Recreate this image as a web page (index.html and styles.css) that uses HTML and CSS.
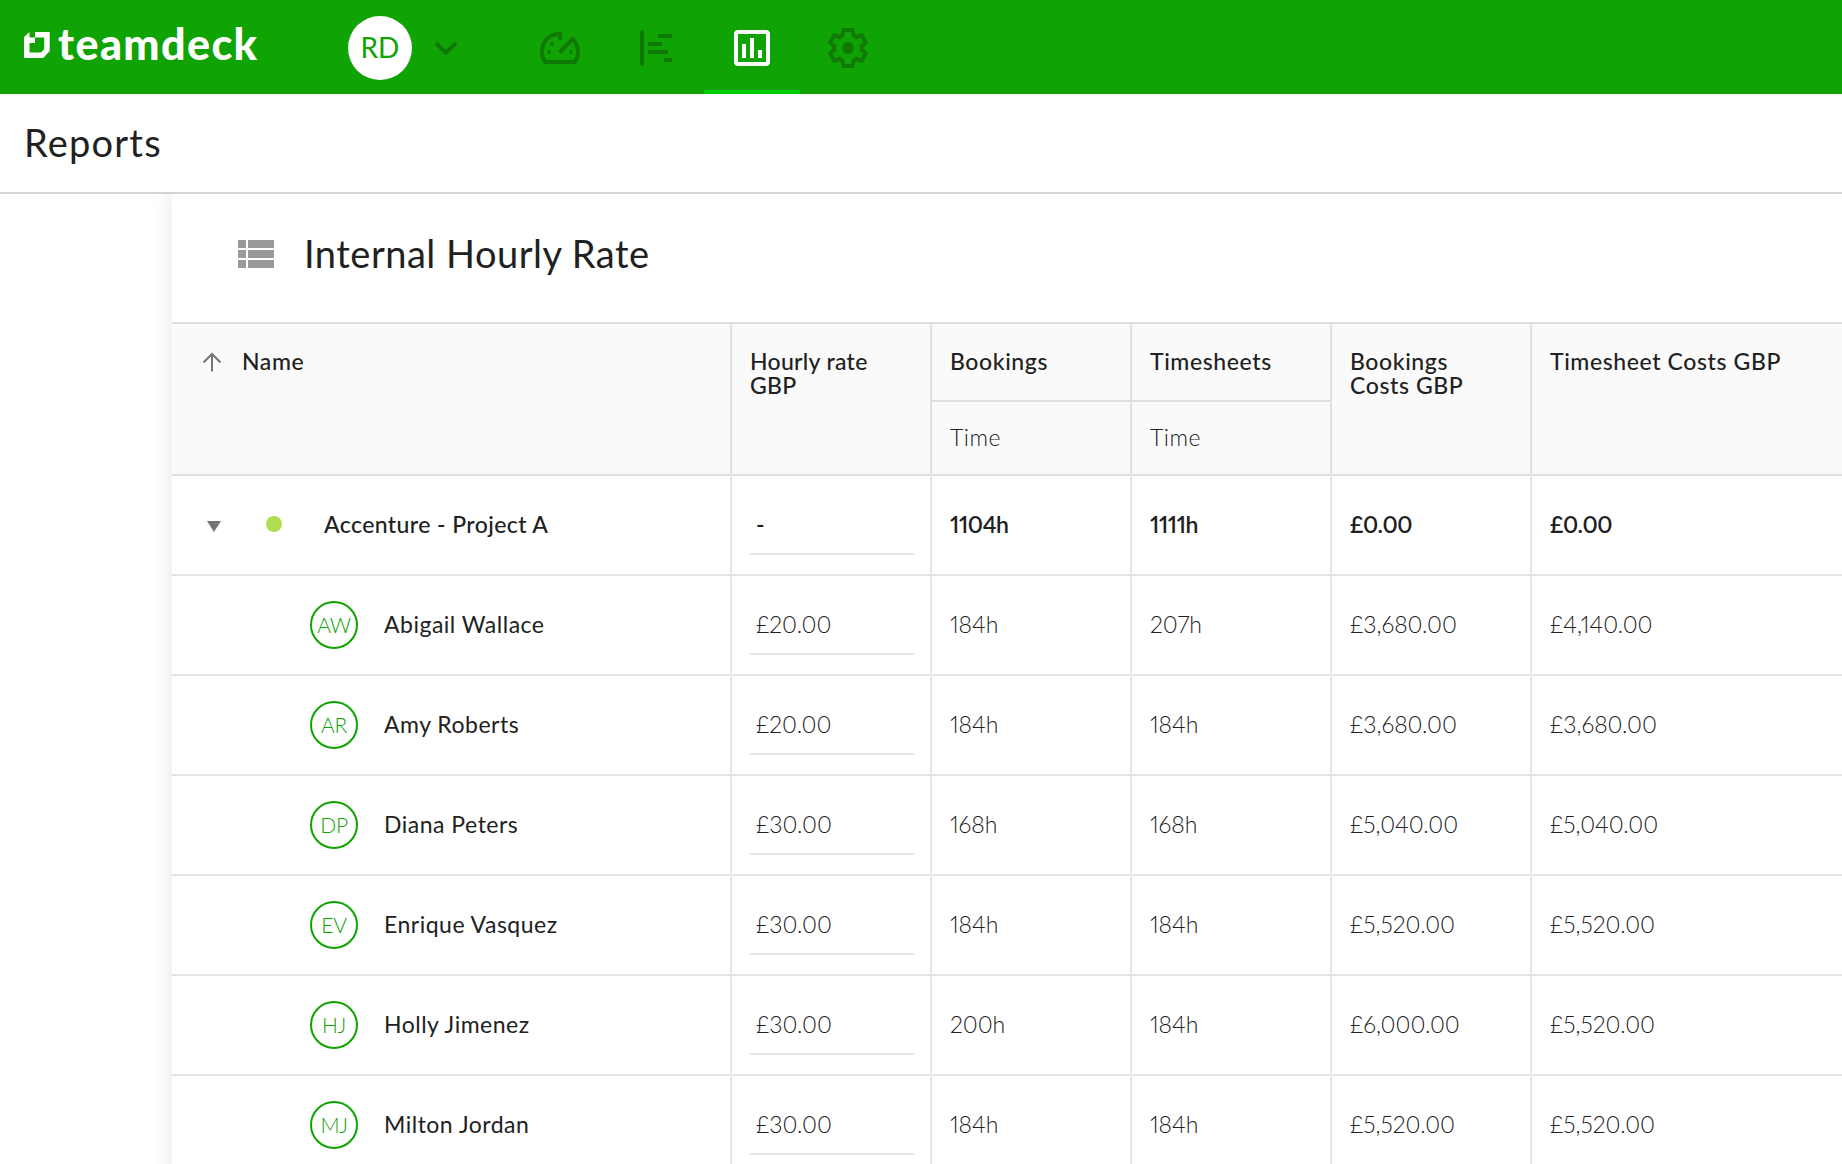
FILE: index.html
```
<!DOCTYPE html>
<html lang="en">
	<head>
		<meta charset="utf-8">
		<meta name="viewport" content="width=device-width, initial-scale=1">
		<title>Teamdeck - Reports</title>
		<link rel="stylesheet" href="styles.css">
	</head>
	<body>
		<header class="topbar">
			<a class="logo">
				<svg class="logo-mark" width="26" height="26" viewBox="0 0 26 26">
					<path fill="#fff" d="M0 5L5.500 0v5.500H11V0h14.700v19l-6.500 7H0zM11 5.500v5.500H5.500v9.500h11.500l3.200-3.500V5.500z"/>
				</svg>
				<span class="logo-text">teamdeck</span>
			</a>
			<div class="user">
				<span class="user-avatar">RD</span>
				<svg class="user-arrow" width="24" height="16" viewBox="0 0 24 16">
					<path fill="none" stroke="#107906" stroke-width="4" d="M2 3l10 9.700l10-9.700"/>
				</svg>
			</div>
			<nav class="nav">
				<a class="nav-item">
					<svg width="40" height="40" viewBox="0 0 40 40" fill="none" stroke="#107906" stroke-width="4">
						<path d="M20 12V6C10 5.500 2 13 2 24c0 4 1.500 7.500 3.500 10h29c2-2.500 3.500-6 3.500-10c0-5-2-9.500-5.500-13L19.500 24.500"/>
						<g fill="#107906" stroke="none"><circle cx="12" cy="16" r="2"/><circle cx="9" cy="24" r="2"/><circle cx="31" cy="24" r="2"/></g>
					</svg>
				</a>
				<a class="nav-item">
					<svg width="40" height="40" viewBox="0 0 40 40" fill="#107906">
						<path d="M4 4q0-2 4-2v36q-4 0-4-2zM22 6h14v4H22zM12 14h14v4H12zM12 22h20v4H12zM28 30h8v4h-8z"/>
					</svg>
				</a>
				<a class="nav-item nav-item-active">
					<svg width="40" height="40" viewBox="0 0 40 40" fill="#fff">
						<rect x="4" y="4" width="32" height="32" rx="2" fill="none" stroke="#fff" stroke-width="4"/>
						<path d="M10 16h4v14h-4zM18 10h4v20h-4zM26 22h4v8h-4z"/>
					</svg>
				</a>
				<a class="nav-item">
					<svg width="40" height="40" viewBox="0 0 40 40">
						<path fill="none" stroke="#107906" stroke-width="4" stroke-linejoin="round" d="M15.500 2h9l1 5.500l3 1.700l5.300-2l4.200 7.300l-4.300 3.700v3.600l4.300 3.700l-4.200 7.300l-5.300-2l-3 1.700l-1 5.500h-9l-1-5.500l-3-1.700l-5.300 2L2 25.500l4.300-3.700v-3.600L2 14.500l4.200-7.300l5.300 2l3-1.700z"/>
						<circle cx="20" cy="20" r="6" fill="#107906"/>
					</svg>
				</a>
			</nav>
		</header>
		<div class="page-head">
			<h1>Reports</h1>
		</div>
		<main class="content">
			<section class="report">
				<div class="report-title">
					<svg width="36" height="28" viewBox="0 0 36 28" fill="#999">
						<path d="M0 0h8v8H0zM10 0h26v8H10zM0 10h8v8H0zM10 10h26v8H10zM0 20h8v8H0zM10 20h26v8H10z"/>
					</svg>
					<h2>Internal Hourly Rate</h2>
				</div>
				<div class="table-head">
					<div class="cell head-cell head-name">
						<svg width="20" height="20" viewBox="0 0 20 20">
							<path fill="none" stroke="#757575" stroke-width="2" d="M10 19.500V2M1.500 10.500L10 2l8.500 8.500"/>
						</svg>
						<span>Name</span>
					</div>
					<div class="cell head-cell head-rate">Hourly rate<br>GBP</div>
					<div class="head-group">
						<div class="cell head-cell">Bookings</div>
						<div class="cell sub-cell">Time</div>
					</div>
					<div class="head-group">
						<div class="cell head-cell">Timesheets</div>
						<div class="cell sub-cell">Time</div>
					</div>
					<div class="cell head-cell">Bookings<br>Costs GBP</div>
					<div class="cell head-cell">Timesheet Costs GBP</div>
				</div>
				<div class="row row-project">
					<div class="cell name-cell">
						<svg class="toggle" width="14" height="11" viewBox="0 0 14 11"><path fill="#757575" d="M0 0h14L7 11z"/></svg>
						<span class="dot"></span>
						<span class="project-name">Accenture - Project A</span>
					</div>
					<div class="cell"><span class="rate">-</span></div>
					<div class="cell">1104h</div>
					<div class="cell">1111h</div>
					<div class="cell">£0.00</div>
					<div class="cell">£0.00</div>
				</div>
				<div class="row">
					<div class="cell name-cell"><span class="avatar">AW</span><span class="name">Abigail Wallace</span></div>
					<div class="cell"><span class="rate">£20.00</span></div>
					<div class="cell">184h</div>
					<div class="cell">207h</div>
					<div class="cell">£3,680.00</div>
					<div class="cell">£4,140.00</div>
				</div>
				<div class="row">
					<div class="cell name-cell"><span class="avatar">AR</span><span class="name">Amy Roberts</span></div>
					<div class="cell"><span class="rate">£20.00</span></div>
					<div class="cell">184h</div>
					<div class="cell">184h</div>
					<div class="cell">£3,680.00</div>
					<div class="cell">£3,680.00</div>
				</div>
				<div class="row">
					<div class="cell name-cell"><span class="avatar">DP</span><span class="name">Diana Peters</span></div>
					<div class="cell"><span class="rate">£30.00</span></div>
					<div class="cell">168h</div>
					<div class="cell">168h</div>
					<div class="cell">£5,040.00</div>
					<div class="cell">£5,040.00</div>
				</div>
				<div class="row">
					<div class="cell name-cell"><span class="avatar">EV</span><span class="name">Enrique Vasquez</span></div>
					<div class="cell"><span class="rate">£30.00</span></div>
					<div class="cell">184h</div>
					<div class="cell">184h</div>
					<div class="cell">£5,520.00</div>
					<div class="cell">£5,520.00</div>
				</div>
				<div class="row">
					<div class="cell name-cell"><span class="avatar">HJ</span><span class="name">Holly Jimenez</span></div>
					<div class="cell"><span class="rate">£30.00</span></div>
					<div class="cell">200h</div>
					<div class="cell">184h</div>
					<div class="cell">£6,000.00</div>
					<div class="cell">£5,520.00</div>
				</div>
				<div class="row">
					<div class="cell name-cell"><span class="avatar">MJ</span><span class="name">Milton Jordan</span></div>
					<div class="cell"><span class="rate">£30.00</span></div>
					<div class="cell">184h</div>
					<div class="cell">184h</div>
					<div class="cell">£5,520.00</div>
					<div class="cell">£5,520.00</div>
				</div>
			</section>
		</main>
	</body>
</html>
```
FILE: styles.css
```
* {
	box-sizing: border-box;
}

body {
	margin: 0;
	height: 100vh;
	overflow: hidden;
	display: flex;
	flex-direction: column;
	background-color: #fff;
	color: #212121;
	font-family: Lato, "Open Sans", sans-serif;
	font-size: 23px;
	line-height: 24px;
}

h1, h2 {
	margin: 0;
	font-size: 38px;
	line-height: 44px;
	font-weight: 400;
}

h1 {
	letter-spacing: 1.2px;
}

h2 {
	letter-spacing: .5px;
}

/* top bar */

.topbar {
	display: flex;
	flex: none;
	height: 94px;
	background-color: #0fa303;
}

.logo {
	display: flex;
	width: 324px;
	padding: 32px 0 0 24px;
}

.logo-text {
	margin: -8px 0 0 8px;
	color: #fff;
	font-size: 43px;
	line-height: 40px;
	font-weight: 900;
	letter-spacing: 1.4px;
}

.user {
	display: flex;
	align-items: center;
	width: 164px;
	margin-left: 24px;
	margin-top: 2px;
	gap: 22px;
}

.user-avatar {
	width: 64px;
	height: 64px;
	border-radius: 50%;
	background-color: #fff;
	color: #0fa303;
	font-size: 28px;
	line-height: 62px;
	text-align: center;
}

.nav {
	display: flex;
}

.nav-item {
	display: flex;
	justify-content: center;
	width: 96px;
	padding-top: 28px;
}

.nav-item-active {
	border-bottom: 4px solid #00d000;
}

/* page heading */

.page-head {
	flex: none;
	height: 100px;
	padding: 26px 24px 0;
	border-bottom: 2px solid #d4d4d4;
}

/* report */

.content {
	flex: 1;
	overflow: hidden;
	padding-left: 172px;
}

.report {
	min-height: 100%;
	box-shadow: 0 0 20px rgba(0, 0, 0, .11);
}

.report-title {
	display: flex;
	gap: 30px;
	height: 130px;
	padding: 46px 66px 0;
	border-bottom: 2px solid #dfdfdf;
}

.report-title h2 {
	margin-top: -9px;
}

.table-head,
.row {
	display: grid;
	grid-template-columns: 560px 200px 200px 200px 200px 1fr;
}

.table-head {
	height: 152px;
	border-bottom: 2px solid #dfdfdf;
	background-color: #fafafa;
}

.row {
	height: 100px;
	border-bottom: 2px solid #e4e4e4;
	font-weight: 300;
	font-variant-numeric: proportional-nums;
}

.cell {
	padding: 35px 16px 0 18px;
	border-right: 2px solid #e4e4e4;
	border-top: 1px solid transparent;
	border-bottom: 1px solid transparent;
	letter-spacing: -.05px;
}

.cell:last-child {
	border-right-color: transparent;
}

.head-cell {
	padding-top: 24px;
	border-right-color: #dfdfdf;
	font-weight: 500;
	letter-spacing: .6px;
}

.head-name {
	display: flex;
	gap: 20px;
	padding-left: 30px;
}

.head-name svg {
	margin-top: 3px;
}

.head-rate {
	letter-spacing: .3px;
}

.head-group {
	display: grid;
	grid-template-rows: 78px 72px;
}

.head-group .head-cell {
	border-bottom: 2px solid #dfdfdf;
}

.head-group .sub-cell {
	padding-top: 22px;
	border-right: 2px solid #dfdfdf;
	font-weight: 300;
	letter-spacing: .5px;
}

.row-project {
	font-weight: 600;
}

.row-project .cell {
	letter-spacing: -.4px;
}

.name-cell {
	display: flex;
	padding-top: 0;
	font-weight: 400;
	letter-spacing: .5px;
}

.row-project .name-cell {
	padding: 35px 0 0 35px;
	font-weight: 500;
	letter-spacing: .4px;
}

.toggle {
	margin-top: 9px;
}

.dot {
	width: 16px;
	height: 16px;
	margin: 4px 42px 0 45px;
	border-radius: 50%;
	background-color: #afde52;
}

.avatar {
	width: 48px;
	height: 48px;
	margin: 24px 26px 0 120px;
	border: 2px solid #0fa303;
	border-radius: 50%;
	color: #0fa303;
	font-size: 21px;
	line-height: 44px;
	font-weight: 300;
	letter-spacing: -.3px;
	text-align: center;
}

.name {
	padding-top: 35px;
}

.rate {
	display: block;
	width: 164px;
	height: 43px;
	padding-left: 6px;
	border-bottom: 2px solid #e4e4e4;
}
```
